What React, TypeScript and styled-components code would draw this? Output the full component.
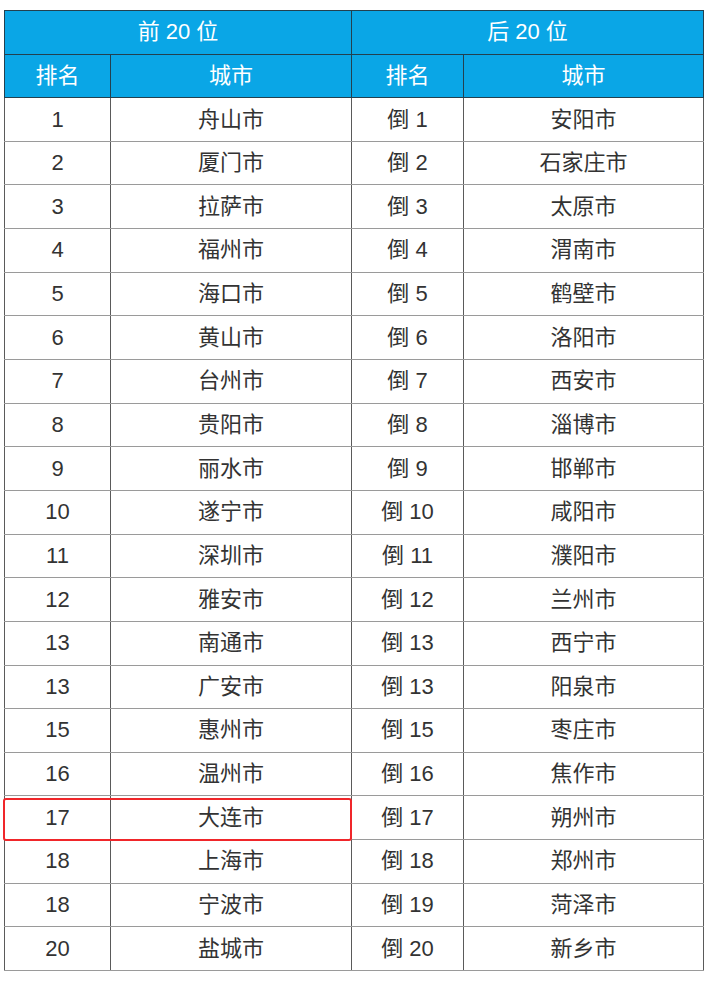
import styled, { createGlobalStyle } from "styled-components";

const left = ["舟山市","厦门市","拉萨市","福州市","海口市","黄山市","台州市","贵阳市","丽水市","遂宁市","深圳市","雅安市","南通市","广安市","惠州市","温州市","大连市","上海市","宁波市","盐城市"];
const leftRank = ["1","2","3","4","5","6","7","8","9","10","11","12","13","13","15","16","17","18","18","20"];
const right = ["安阳市","石家庄市","太原市","渭南市","鹤壁市","洛阳市","西安市","淄博市","邯郸市","咸阳市","濮阳市","兰州市","西宁市","阳泉市","枣庄市","焦作市","朔州市","郑州市","菏泽市","新乡市"];
const rightRank = ["1","2","3","4","5","6","7","8","9","10","11","12","13","13","15","16","17","18","19","20"];

const Global = createGlobalStyle`
  body {
    margin: 0;
    background: #fff;
    font-family: "Liberation Sans", "Noto Sans CJK SC", sans-serif;
  }
`;

const Page = styled.div`
  padding: 10px 9px 0 4px;
`;

const Table = styled.table`
  width: 699px;
  border-collapse: collapse;
  table-layout: fixed;
`;

const HeadCell = styled.th`
  height: 42.6px;
  padding: 0;
  background: #0aa6e6;
  color: #fff;
  font-weight: 400;
  font-size: 22px;
  line-height: 24px;
  border: 1px solid #23404f;
  text-align: center;
`;

const Cell = styled.td`
  height: 42.65px;
  padding: 0;
  color: #333;
  font-size: 22px;
  line-height: 24px;
  text-align: center;
  border-left: 1px solid #5a5a5a;
  border-right: 1px solid #5a5a5a;
  border-top: 1px solid #9a9a9a;
  border-bottom: 1px solid #9a9a9a;
  position: relative;
`;

const Highlight = styled.div`
  position: absolute;
  left: -2px;
  top: 2px;
  width: 349px;
  height: 43px;
  box-sizing: border-box;
  border: 2px solid #f0262a;
  border-radius: 3px;
  pointer-events: none;
`;

export default function App() {
  return (
    <Page>
      <Global />
      <Table>
        <colgroup>
          <col style={{ width: 106 }} />
          <col style={{ width: 241 }} />
          <col style={{ width: 112 }} />
          <col style={{ width: 240 }} />
        </colgroup>
        <thead>
          <tr>
            <HeadCell colSpan={2}>前 20 位</HeadCell>
            <HeadCell colSpan={2}>后 20 位</HeadCell>
          </tr>
          <tr>
            <HeadCell>排名</HeadCell>
            <HeadCell>城市</HeadCell>
            <HeadCell>排名</HeadCell>
            <HeadCell>城市</HeadCell>
          </tr>
        </thead>
        <tbody>
          {left.map((city, i) => (
            <tr key={i}>
              <Cell>
                {leftRank[i]}
                {i === 16 && <Highlight />}
              </Cell>
              <Cell>{city}</Cell>
              <Cell>倒 {rightRank[i]}</Cell>
              <Cell>{right[i]}</Cell>
            </tr>
          ))}
        </tbody>
      </Table>
    </Page>
  );
}
